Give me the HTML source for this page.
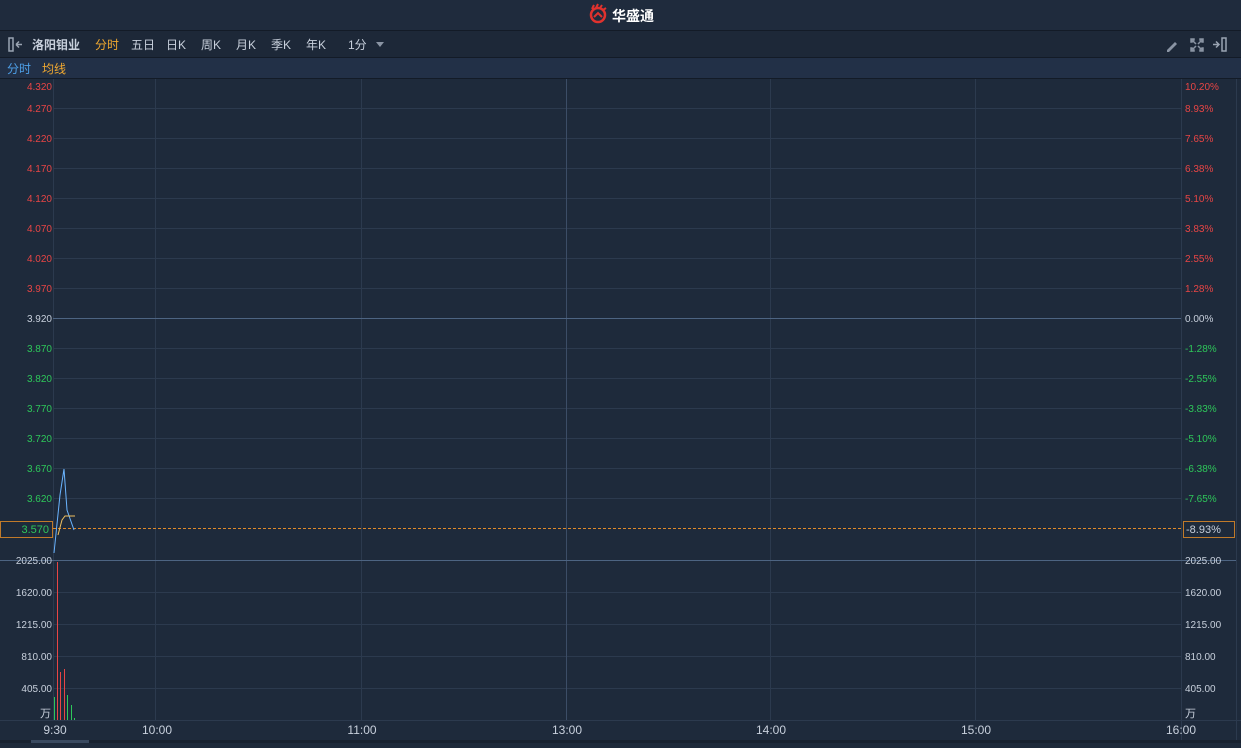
<!DOCTYPE html><html><head><meta charset="utf-8"><style>
body{margin:0;width:1241px;height:743px;overflow:hidden;background:#1e2a3b;font-family:"Liberation Sans","Noto Sans CJK SC",sans-serif}
svg text{font-family:"Liberation Sans","Noto Sans CJK SC",sans-serif}
</style></head><body>
<svg width="1241" height="743" xmlns="http://www.w3.org/2000/svg">
<rect width="1241" height="743" fill="#1e2a3b"/>
<rect width="1241" height="30" fill="#1f2b3d"/>
<line x1="0" y1="30.5" x2="1241" y2="30.5" stroke="#131b27"/>
<g transform="translate(598,15)"><circle r="7" fill="none" stroke="#e0322e" stroke-width="2.5"/><path d="M-6,-6 L-4,-10 M-2,-7 L0,-11 M2,-7 L4,-10 M5,-5 L8,-7" stroke="#e0322e" stroke-width="2"/><path d="M-4,2 L0,-2 L4,2" stroke="#e0322e" stroke-width="2" fill="none"/></g>
<text x="612" y="21" font-size="14" font-weight="bold" fill="#fff">华盛通</text>
<rect x="0" y="31" width="1241" height="26" fill="#1d2838"/>
<line x1="0" y1="57.5" x2="1241" y2="57.5" stroke="#131b27"/>
<rect x="9" y="38" width="4" height="13" fill="none" stroke="#9aa4b2" stroke-width="1.5"/>
<path d="M16,44.5 H22 M16,44.5 l3,-3 M16,44.5 l3,3" stroke="#9aa4b2" stroke-width="1.5" fill="none"/>
<g font-size="12" fill="#c8d0dc">
<text x="32" y="49" font-weight="bold">洛阳钼业</text>
<text x="95" y="49" fill="#f0a830">分时</text>
<text x="131" y="49">五日</text><text x="166" y="49">日K</text><text x="201" y="49">周K</text><text x="236" y="49">月K</text><text x="271" y="49">季K</text><text x="306" y="49">年K</text><text x="348" y="49">1分</text></g>
<path d="M376,42 h8 l-4,5z" fill="#8a94a3"/>
<path d="M1167,50 l8,-8 l2,2 l-8,8 h-2z" fill="#8a94a3"/>
<path d="M1191,39 h3 v1 h-2 v2 h-1z M1203,39 h-3 v1 h2 v2 h1z M1191,51 h3 v-1 h-2 v-2 h-1z M1203,51 h-3 v-1 h2 v-2 h1z M1193,41 l3,3 M1201,41 l-3,3 M1193,49 l3,-3 M1201,49 l-3,-3" stroke="#8a94a3" stroke-width="1.5" fill="none"/>
<path d="M1213,44.5 h6 M1216,41.5 l3,3 l-3,3" stroke="#9aa4b2" stroke-width="1.5" fill="none"/>
<rect x="1222" y="38" width="4" height="13" fill="none" stroke="#9aa4b2" stroke-width="1.5"/>
<rect x="0" y="58" width="1241" height="20" fill="#223047"/>
<line x1="0" y1="78.5" x2="1241" y2="78.5" stroke="#131b27"/>
<text x="7" y="73" font-size="12" fill="#4ea0e8">分时</text><text x="42" y="73" font-size="12" fill="#f0a830">均线</text>
<g stroke="#2c3a4e" stroke-width="1">
<line x1="53.5" y1="79" x2="53.5" y2="720"/><line x1="1181.5" y1="79" x2="1181.5" y2="743"/>
<line x1="155.5" y1="79" x2="155.5" y2="720"/><line x1="361.5" y1="79" x2="361.5" y2="720"/><line x1="770.5" y1="79" x2="770.5" y2="720"/><line x1="975.5" y1="79" x2="975.5" y2="720"/>
<path d="M53,108.5H1181M53,138.5H1181M53,168.5H1181M53,198.5H1181M53,228.5H1181M53,258.5H1181M53,288.5H1181M53,348.5H1181M53,378.5H1181M53,408.5H1181M53,438.5H1181M53,468.5H1181M53,498.5H1181M53,592.5H1181M53,624.5H1181M53,656.5H1181M53,688.5H1181M0,720.5H1241"/>
</g>
<line x1="1236.5" y1="79" x2="1236.5" y2="743" stroke="#2c3a4e"/>
<line x1="566.5" y1="79" x2="566.5" y2="720" stroke="#3c4d66"/>
<line x1="53" y1="318.5" x2="1181" y2="318.5" stroke="#4d6482"/>
<line x1="0" y1="560.5" x2="1236" y2="560.5" stroke="#4d6482"/>
<line x1="53" y1="528.5" x2="1181" y2="528.5" stroke="#e08a2a" stroke-dasharray="3,2"/>
<g font-size="10" text-anchor="end">
<g fill="#e84545"><text x="52" y="90">4.320</text><text x="52" y="112">4.270</text><text x="52" y="142">4.220</text><text x="52" y="172">4.170</text><text x="52" y="202">4.120</text><text x="52" y="232">4.070</text><text x="52" y="262">4.020</text><text x="52" y="292">3.970</text></g>
<text x="52" y="322" fill="#c8d0dc">3.920</text>
<g fill="#2ec75a"><text x="52" y="352">3.870</text><text x="52" y="382">3.820</text><text x="52" y="412">3.770</text><text x="52" y="442">3.720</text><text x="52" y="472">3.670</text><text x="52" y="502">3.620</text></g>
<g fill="#c8d0dc"><text x="52" y="564">2025.00</text><text x="52" y="596">1620.00</text><text x="52" y="628">1215.00</text><text x="52" y="660">810.00</text><text x="52" y="692">405.00</text></g>
</g>
<rect x="0.5" y="521.5" width="52" height="16" fill="#1e2a3b" stroke="#c07a2a"/>
<text x="49" y="533" font-size="11" fill="#2ec75a" text-anchor="end">3.570</text>
<text x="40" y="717" font-size="11" fill="#c8d0dc">万</text>
<g font-size="10">
<g fill="#e84545"><text x="1185" y="90">10.20%</text><text x="1185" y="112">8.93%</text><text x="1185" y="142">7.65%</text><text x="1185" y="172">6.38%</text><text x="1185" y="202">5.10%</text><text x="1185" y="232">3.83%</text><text x="1185" y="262">2.55%</text><text x="1185" y="292">1.28%</text></g>
<text x="1185" y="322" fill="#c8d0dc">0.00%</text>
<g fill="#2ec75a"><text x="1185" y="352">-1.28%</text><text x="1185" y="382">-2.55%</text><text x="1185" y="412">-3.83%</text><text x="1185" y="442">-5.10%</text><text x="1185" y="472">-6.38%</text><text x="1185" y="502">-7.65%</text></g>
<g fill="#c8d0dc"><text x="1185" y="564">2025.00</text><text x="1185" y="596">1620.00</text><text x="1185" y="628">1215.00</text><text x="1185" y="660">810.00</text><text x="1185" y="692">405.00</text></g>
</g>
<rect x="1183.5" y="521.5" width="51" height="16" fill="#1e2a3b" stroke="#c07a2a"/>
<text x="1186" y="533" font-size="11" fill="#c8d0dc">-8.93%</text>
<text x="1185" y="717" font-size="11" fill="#c8d0dc">万</text>
<g stroke-width="1">
<line x1="54.5" y1="697" x2="54.5" y2="720" stroke="#2ec75a"/>
<line x1="57.5" y1="562" x2="57.5" y2="720" stroke="#e84545"/>
<line x1="60.5" y1="672" x2="60.5" y2="720" stroke="#e84545"/>
<line x1="64.5" y1="669" x2="64.5" y2="720" stroke="#e84545"/>
<line x1="67.5" y1="695" x2="67.5" y2="720" stroke="#2ec75a"/>
<line x1="71.5" y1="705" x2="71.5" y2="720" stroke="#2ec75a"/>
<line x1="74.5" y1="718" x2="74.5" y2="720" stroke="#2ec75a"/>
</g>
<polyline points="54,553 60,495 64,469 67,510 74,530" fill="none" stroke="#6ab4ff" stroke-width="1"/>
<polyline points="58,535 62,520 65,516 75,516" fill="none" stroke="#f0c060" stroke-width="1"/>
<g font-size="12" fill="#c8d0dc" text-anchor="middle">
<text x="55" y="734">9:30</text><text x="157" y="734">10:00</text><text x="362" y="734">11:00</text><text x="567" y="734">13:00</text><text x="771" y="734">14:00</text><text x="976" y="734">15:00</text><text x="1181" y="734">16:00</text></g>
<rect x="0" y="740" width="1241" height="3" fill="#182230"/>
<rect x="31" y="740" width="58" height="3" fill="#3a4a60"/>
</svg>
</body></html>
